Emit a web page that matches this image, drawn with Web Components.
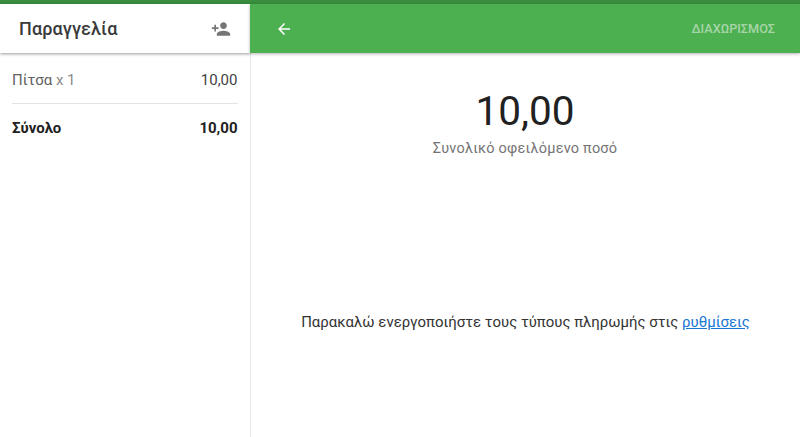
<!DOCTYPE html>
<html>
<head>
<meta charset="utf-8">
<title>Παραγγελία</title>
<style>
html,body{margin:0;height:100%;background:#fff;font-family:Roboto,"Noto Sans",sans-serif;overflow:hidden}
body{display:flex;flex-direction:column}
</style>
</head>
<body>
<status-strip></status-strip>
<checkout-page>
  <order-panel slot="side"></order-panel>
  <payment-panel slot="main"></payment-panel>
</checkout-page>

<script>
class StatusStrip extends HTMLElement {
    constructor(){
        super()
        this.attachShadow({mode:'open'}).innerHTML = `<style>
        :host{display:block;height:4px;background:#388e3c;flex:none}
        </style>`
    }
}

class CheckoutPage extends HTMLElement {
    constructor(){
        super()
        this.attachShadow({mode:'open'}).innerHTML = `<style>
        :host{display:flex;flex:1;min-height:0}
        ::slotted([slot=side]){width:250px;flex:none}
        ::slotted([slot=main]){flex:1;min-width:0}
        </style>
        <slot name="side"></slot><slot name="main"></slot>`
    }
}

class OrderPanel extends HTMLElement {
    constructor(){
        super()
        this.attachShadow({mode:'open'}).innerHTML = `<style>
        :host{display:flex;flex-direction:column}
        header{height:49px;display:flex;align-items:center;justify-content:space-between;padding:0 19px 0 19px;background:#fff;
            box-shadow:0 1px 3px rgba(0,0,0,.4);position:relative}
        h1{margin:0;font-size:18px;font-weight:500;color:#3a3a3a;letter-spacing:.1px}
        svg{display:block;width:20px;height:20px;fill:#757575}
        .rows{padding:0 12.5px 0 12px}
        .row{display:flex;justify-content:space-between;align-items:center;font-size:15px;color:#424242}
        .item{height:46px;padding-top:4px;border-bottom:1px solid #e4e4e4}
        .item b{font-weight:400;color:#616161}
        .total{height:48px;font-weight:700;color:#212121}
        .item i{font-style:normal;color:#8a8a8a}
        </style>
        <header><h1>Παραγγελία</h1>
        <svg viewBox="0 0 24 24"><path d="M15 12c2.21 0 4-1.79 4-4s-1.79-4-4-4-4 1.79-4 4 1.79 4 4 4zm-9-2V7H4v3H1v2h3v3h2v-3h3v-2H6zm9 4c-2.67 0-8 1.34-8 4v2h16v-2c0-2.66-5.33-4-8-4z"/></svg>
        </header>
        <div class="rows">
          <div class="row item"><span><b>Πίτσα</b> <i>x 1</i></span><span>10,00</span></div>
          <div class="row total"><span>Σύνολο</span><span>10,00</span></div>
        </div>`
    }
}

class PaymentPanel extends HTMLElement {
    constructor(){
        super()
        this.attachShadow({mode:'open'}).innerHTML = `<style>
        :host{display:flex;flex-direction:column;min-height:0}
        header{height:49px;background:#4caf50;display:flex;align-items:center;justify-content:space-between;
            padding:0 25px 0 25px;box-shadow:0 1px 3px rgba(0,0,0,.3);flex:none;position:relative}
        svg{display:block;width:18px;height:18px;fill:#fff}
        .split{font-size:12.7px;font-weight:500;color:#a5d6a7}
        .body{flex:1;display:flex;flex-direction:column;border-left:1px solid #e6e6e6;min-height:0}
        .amount{display:flex;flex-direction:column;align-items:center;padding-top:34px}
        .sum{font-size:40.5px;line-height:48px;color:#212121;font-weight:400;margin-left:-1px}
        .label{font-size:14.5px;line-height:20px;margin-top:4px;margin-left:-1px;color:#757575;letter-spacing:.2px}
        .notice{flex:1;display:flex;align-items:flex-start;justify-content:center;padding-top:154px;font-size:14.95px;color:#333}
        a{color:#1976d2}
        </style>
        <header>
          <svg viewBox="0 0 24 24"><path d="M20 11H7.83l5.59-5.59L12 4l-8 8 8 8 1.41-1.41L7.83 13H20v-2z"/></svg>
          <span class="split">ΔΙΑΧΩΡΙΣΜΟΣ</span>
        </header>
        <div class="body">
          <div class="amount">
            <div class="sum">10,00</div>
            <div class="label">Συνολικό οφειλόμενο ποσό</div>
          </div>
          <div class="notice"><span>Παρακαλώ ενεργοποιήστε τους τύπους πληρωμής στις <a href="#">ρυθμίσεις</a></span></div>
        </div>`
    }
}

customElements.define('status-strip',StatusStrip)
customElements.define('checkout-page',CheckoutPage)
customElements.define('order-panel',OrderPanel)
customElements.define('payment-panel',PaymentPanel)
</script>
</body>
</html>
